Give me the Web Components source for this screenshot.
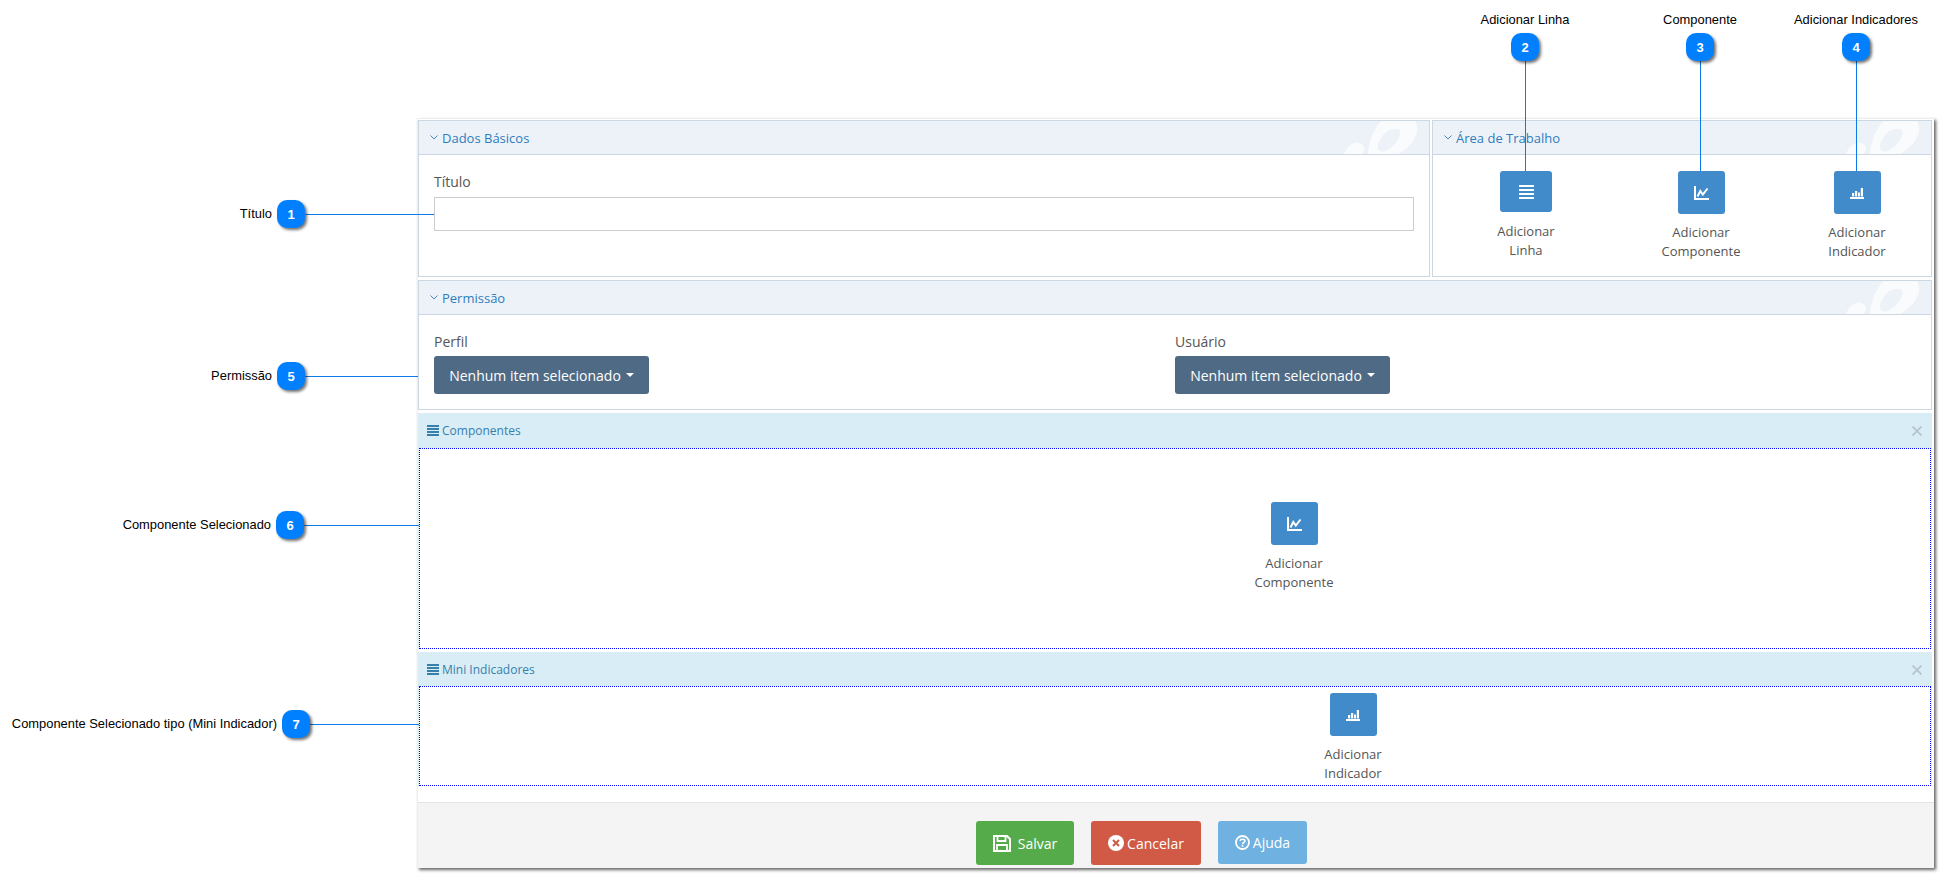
<!DOCTYPE html>
<html lang="pt">
<head>
<meta charset="utf-8">
<title>Dashboard</title>
<style>
html, body { margin: 0; background: #fff; }
body { position: relative; width: 1945px; height: 876px; overflow: hidden; font-family: "Open Sans", sans-serif; }
</style>
</head>
<body>
<app-window>
  <div slot="top">
    <app-panel heading="Dados Básicos" style="height:157px">
      <field-label>Título</field-label>
      <text-box></text-box>
    </app-panel>
    <app-panel heading="Área de Trabalho" style="height:157px">
      <div style="display:flex;padding:0 0 0 28px;margin-top:-1px">
        <tool-button icon="bars" w="52" h="41" gap="10">Adicionar<br>Linha</tool-button>
        <tool-button icon="line" w="47" h="43" gap="9" style="margin-left:75px">Adicionar<br>Componente</tool-button>
        <tool-button icon="area" w="47" h="43" gap="9" style="margin-left:56px">Adicionar<br>Indicador</tool-button>
      </div>
    </app-panel>
  </div>
  <app-panel heading="Permissão" style="height:130px">
    <div style="display:grid;grid-template-columns:741px 1fr">
      <div><field-label>Perfil</field-label><pick-button>Nenhum item selecionado</pick-button></div>
      <div><field-label>Usuário</field-label><pick-button>Nenhum item selecionado</pick-button></div>
    </div>
  </app-panel>
  <drop-row heading="Componentes" head-h="35" body-h="201" pad="53" shift="824">
    <tool-button icon="line" w="47" h="43" gap="9">Adicionar<br>Componente</tool-button>
  </drop-row>
  <drop-row heading="Mini Indicadores" head-h="34" body-h="100" pad="6" shift="883">
    <tool-button icon="area" w="47" h="43" gap="9">Adicionar<br>Indicador</tool-button>
  </drop-row>
  <div slot="footer">
    <foot-button icon="save" color="#55ab4a" w="98" h="44" gap="7">Salvar</foot-button>
    <foot-button icon="cancel" color="#d05a46" w="110" h="44" gap="3">Cancelar</foot-button>
    <foot-button icon="help" color="#6fb1e0" w="89" h="43" gap="3">Ajuda</foot-button>
  </div>
</app-window>

<note-mark n="1" side="left" x="277" y="214" len="129">Título</note-mark>
<note-mark n="5" side="left" x="277" y="376" len="113">Permissão</note-mark>
<note-mark n="6" side="left" x="276" y="525" len="115">Componente Selecionado</note-mark>
<note-mark n="7" side="left" x="282" y="724" len="109">Componente Selecionado tipo (Mini Indicador)</note-mark>
<note-mark n="2" side="top" x="1525" y="33" len="110">Adicionar Linha</note-mark>
<note-mark n="3" side="top" x="1700" y="33" len="110">Componente</note-mark>
<note-mark n="4" side="top" x="1856" y="33" len="110">Adicionar Indicadores</note-mark>

<script>
const ICONS = {
  bars: `<svg width="15" height="14" viewBox="0 0 15 14" fill="#fff"><rect y="0" width="15" height="2"/><rect y="4" width="15" height="2"/><rect y="8" width="15" height="2"/><rect y="12" width="15" height="2"/></svg>`,
  line: `<svg width="15" height="14" viewBox="0 0 15 14"><path d="M1 0v13h14" fill="none" stroke="#fff" stroke-width="2"/><path d="M3.500 10.500 6.300 5l2.500 3.500L13.500 2.500" fill="none" stroke="#fff" stroke-width="2"/></svg>`,
  area: `<svg width="14" height="12" viewBox="0 0 14 12" fill="#fff"><rect x="0" y="10" width="14" height="2"/><rect x="2" y="6" width="2.200" height="3.500"/><rect x="5" y="4" width="2.200" height="5.500"/><rect x="8" y="5.500" width="2" height="4"/><rect x="10.800" y="1" width="2.200" height="8.500"/></svg>`,
  save: `<svg width="18" height="17" viewBox="0 0 18 17"><path d="M1 1h13l3 3v12H1z" fill="none" stroke="#fff" stroke-width="2"/><path d="M4.500 1v5h8V1M4 16v-6h10v6" fill="none" stroke="#fff" stroke-width="1.800"/></svg>`,
  cancel: `<svg width="16" height="16" viewBox="0 0 16 16"><circle cx="8" cy="8" r="8" fill="#fff"/><path d="M5 5l6 6M11 5l-6 6" stroke="#d05a46" stroke-width="2"/></svg>`,
  help: `<svg width="15" height="15" viewBox="0 0 15 15"><circle cx="7.500" cy="7.500" r="6.500" fill="none" stroke="#fff" stroke-width="1.800"/><path d="M5.200 5.800C5.400 3.700 9.800 3.700 9.900 5.900 10 7.500 7.500 7.500 7.500 9.200" fill="none" stroke="#fff" stroke-width="1.600"/><rect x="6.700" y="10" width="1.600" height="1.700" fill="#fff"/></svg>`
};

// base class, only saves the shadow root boilerplate
class ShadowEl extends HTMLElement {
  render(html) {
    this.attachShadow({ mode: "open" });
    this.shadowRoot.innerHTML = html;
  }
}

class AppWindow extends ShadowEl {
  constructor() {
    super();
    this.render(`<style>
:host { display: block; box-sizing: border-box; position: absolute; left: 417px; top: 118px; width: 1517px; height: 750px; background: #fff; border: 1px solid #eee; border-width: 1px 0 0 1px; box-shadow: 2px 2px 3px #666; }
.main { display: flex; flex-direction: column; gap: 3px; padding: 1px 2px 0 0; height: 683px; box-sizing: border-box; }
::slotted([slot=top]) { display: grid; grid-template-columns: 1012px 500px; gap: 2px; }
::slotted([slot=footer]) { display: flex; gap: 17px; box-sizing: border-box; height: 66px; padding: 18px 0 0 558px; background: #f4f4f4; border-top: 1px solid #e4e4e4; }
</style><div class="main"><slot name="top"></slot><slot></slot></div><slot name="footer"></slot>`);
  }
}

class AppPanel extends ShadowEl {
  constructor() {
    super();
    this.render(`<style>
:host { display: block; box-sizing: border-box; border: 1px solid #ccd7e4; background: #fff; }
.head { position: relative; overflow: hidden; height: 34px; box-sizing: border-box; background: #edf2f9; border-bottom: 1px solid #ccd7e4; display: flex; align-items: center; padding-left: 11px; gap: 4px; color: #2f7dbd; font-size: 13px; }
.mark { position: absolute; right: 0; top: 0; }
.body { padding: 17px 15px 0; color: #555; }
</style><div class="head"><svg width="8" height="5" viewBox="0 0 8 5"><path d="M.5.500 4 4 7.500.500" fill="none" stroke="#428bca"/></svg><span id="t"></span>
<svg class="mark" width="100" height="34" viewBox="0 0 100 34" fill="#fafbfd"><path fill-rule="evenodd" d="M39 34C39 22 45 8 52 0H86C90 6 88 14 84 20 80 26 73 31 67 34ZM56 12C51 17 47 26 50 29 54 33 63 28 68 20 73 13 72 8 68 8 64 8 60 8 56 12Z"/><path d="M15 34C16 27 24 20 30 22 37 24 36 30 32 34Z"/></svg>
</div><div class="body"><slot></slot></div>`);
    this.shadowRoot.getElementById("t").textContent = this.getAttribute("heading");
  }
}

class DropRow extends ShadowEl {
  constructor() {
    super();
    this.render(`<style>
:host { display: block; box-sizing: border-box; background: #d9edf7; }
.head { height: ${this.getAttribute("head-h")}px; box-sizing: border-box; display: flex; align-items: center; padding-left: 9px; gap: 3px; color: #3680ab; font-size: 12px; position: relative; }
.head svg.x { position: absolute; right: 10px; top: 13px; }
.body { box-sizing: border-box; height: ${this.getAttribute("body-h")}px; background: #fff; border: 1px dotted #00f; margin: 0 1px; padding-top: ${this.getAttribute("pad")}px; padding-left: ${this.getAttribute("shift")}px; }
</style><div class="head"><svg width="12" height="11" viewBox="0 0 12 11" fill="#3680ab"><rect width="12" height="2"/><rect y="3" width="12" height="2"/><rect y="6" width="12" height="2"/><rect y="9" width="12" height="2"/></svg><span id="t"></span>
<svg class="x" width="10" height="10" viewBox="0 0 10 10"><path d="M.5.500l9 9M9.500.500l-9 9" stroke="#b8c4cc" stroke-width="1.800"/></svg></div>
<div class="body"><slot></slot></div>`);
    this.shadowRoot.getElementById("t").textContent = this.getAttribute("heading");
  }
}

class FieldLabel extends ShadowEl {
  constructor() {
    super();
    this.render(`<style>:host { display: block; font-size: 14px; line-height: 20px; color: #555; margin-bottom: 5px; }</style><slot></slot>`);
  }
}

class TextBox extends ShadowEl {
  constructor() {
    super();
    this.render(`<style>:host { display: block; box-sizing: border-box; width: 980px; height: 34px; border: 1px solid #ccc; background: #fff; }</style>`);
  }
}

class PickButton extends ShadowEl {
  constructor() {
    super();
    this.render(`<style>
:host { display: inline-flex; box-sizing: border-box; height: 38px; width: 215px; margin-top: -1px; align-items: center; justify-content: center; gap: 5px; background: #4f6a85; color: #fff; border-radius: 3px; font-size: 14px; white-space: nowrap; }
i { border: 4px solid transparent; border-top-color: #fff; border-bottom: 0; }
</style><slot></slot><i></i>`);
  }
}

class ToolButton extends ShadowEl {
  constructor() {
    super();
    const w = this.getAttribute("w"), h = this.getAttribute("h");
    this.render(`<style>
:host { display: flex; flex-direction: column; align-items: center; width: 100px; font-size: 13px; line-height: 19px; color: #555; text-align: center; }
.b { width: ${w}px; height: ${h}px; background: #428bca; border-radius: 3px; display: flex; align-items: center; justify-content: center; margin-bottom: ${this.getAttribute("gap")}px; }
</style><div class="b">${ICONS[this.getAttribute("icon")]}</div><div><slot></slot></div>`);
  }
}

class FootButton extends ShadowEl {
  constructor() {
    super();
    this.render(`<style>
:host { display: flex; box-sizing: border-box; width: ${this.getAttribute("w")}px; height: ${this.getAttribute("h")}px; align-items: center; justify-content: center; gap: ${this.getAttribute("gap")}px; background: ${this.getAttribute("color")}; color: #fff; border-radius: 3px; font-size: 14px; }
</style>${ICONS[this.getAttribute("icon")]}<slot></slot>`);
  }
}

// callouts sit on top of the screenshot, their place is the content
class NoteMark extends ShadowEl {
  constructor() {
    super();
    const side = this.getAttribute("side");
    const x = +this.getAttribute("x"), y = +this.getAttribute("y"), len = +this.getAttribute("len");
    const pos = side === "left"
      ? `left:${x}px;top:${y - 14}px`
      : `left:${x - 14}px;top:${y}px`;
    const line = side === "left"
      ? `left:28px;top:14px;width:${len}px;height:1px`
      : `left:14px;top:28px;width:1px;height:${len}px`;
    const label = side === "left"
      ? `right:33px;top:0;line-height:28px`
      : `left:14px;transform:translateX(-50%);bottom:33px;line-height:16px`;
    this.render(`<style>
:host { position: absolute; ${pos}; width: 28px; height: 28px; z-index: 5; font-family: "Liberation Sans", Arial, sans-serif; }
.b { position: relative; width: 28px; height: 28px; box-sizing: border-box; background: #007fff; color: #fff; border-radius: 10px; box-shadow: 2px 2px 3px rgba(0,0,0,.55); font-size: 13px; font-weight: bold; display: flex; align-items: center; justify-content: center; }
.l { position: absolute; ${line}; background: #0a7be8; }
.t { position: absolute; ${label}; white-space: nowrap; font-size: 12.9px; color: #000; }
</style><div class="l"></div><div class="b">${this.getAttribute("n")}</div><div class="t"><slot></slot></div>`);
  }
}

customElements.define("app-window", AppWindow);
customElements.define("app-panel", AppPanel);
customElements.define("drop-row", DropRow);
customElements.define("field-label", FieldLabel);
customElements.define("text-box", TextBox);
customElements.define("pick-button", PickButton);
customElements.define("tool-button", ToolButton);
customElements.define("foot-button", FootButton);
customElements.define("note-mark", NoteMark);
</script>
</body>
</html>
